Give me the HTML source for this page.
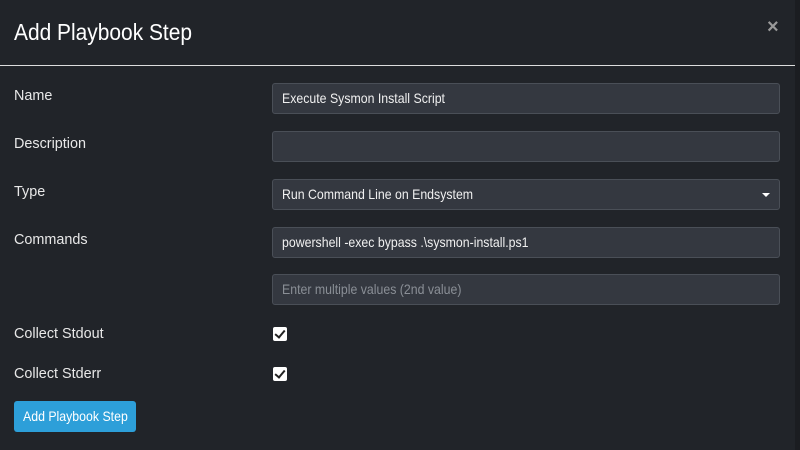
<!DOCTYPE html><html><head><style>
body{margin:0;width:800px;height:450px;background:#212429;overflow:hidden;position:relative;font-family:"Liberation Sans",sans-serif;color:#e8e8e8}
.s{display:inline-block;transform-origin:0 50%;white-space:nowrap}
.t{position:absolute;font-size:15px}
.t .s{transform:scaleX(.96)}
.h{position:absolute;left:14px;top:19px;font-size:23px;color:#fff}
.h .s{transform:scaleX(.91)}
.x{position:absolute;left:767px;top:16px;font-size:20px;color:#999;font-weight:bold}
.line{position:absolute;left:0;top:65px;width:795px;height:1px;background:#ddd}
.in{position:absolute;left:272px;height:29px;background:#343840;border:1px solid #4a4f57;border-radius:3px;font-size:14px;line-height:29px;padding-left:9px;width:497px;color:#f0f0f0}
.in .s{transform:scaleX(.88)}
.ph{color:#8a8f96}
.cb{position:absolute;left:273px;width:14px;height:14px;background:#fff;border-radius:2px}
.cb:after{content:"";position:absolute;left:4px;top:1px;width:4px;height:8px;border:solid #222;border-width:0 2.5px 2.5px 0;transform:rotate(40deg)}
.btn{position:absolute;left:14px;top:401px;width:122px;height:31px;background:#2d9fd9;border-radius:3px;color:#fff;font-size:14px;line-height:31px}
.btn .s{transform:scaleX(.88);margin-left:9px}
.r{position:absolute;left:795px;top:0;width:5px;height:450px;background:#1b1d21}
</style></head><body>
<div class="r"></div>
<div class="h"><span class="s">Add Playbook Step</span></div><div class="x">×</div>
<div class="line"></div>
<div class="t" style="left:14px;top:87px"><span class="s">Name</span></div>
<div class="t" style="left:14px;top:135px"><span class="s">Description</span></div>
<div class="t" style="left:14px;top:183px"><span class="s">Type</span></div>
<div class="t" style="left:14px;top:231px"><span class="s">Commands</span></div>
<div class="t" style="left:14px;top:325px"><span class="s">Collect Stdout</span></div>
<div class="t" style="left:14px;top:365px"><span class="s">Collect Stderr</span></div>
<div class="in" style="top:83px"><span class="s">Execute Sysmon Install Script</span></div>
<div class="in" style="top:131px"></div>
<div class="in" style="top:179px"><span class="s">Run Command Line on Endsystem</span><span style="position:absolute;right:9px;top:13px;width:0;height:0;border-left:4px solid transparent;border-right:4px solid transparent;border-top:4px solid #fff"></span></div>
<div class="in" style="top:227px"><span class="s">powershell -exec bypass .\sysmon-install.ps1</span></div>
<div class="in ph" style="top:274px"><span class="s">Enter multiple values (2nd value)</span></div>
<div class="cb" style="top:327px"></div>
<div class="cb" style="top:367px"></div>
<div class="btn"><span class="s">Add Playbook Step</span></div>
</body></html>
